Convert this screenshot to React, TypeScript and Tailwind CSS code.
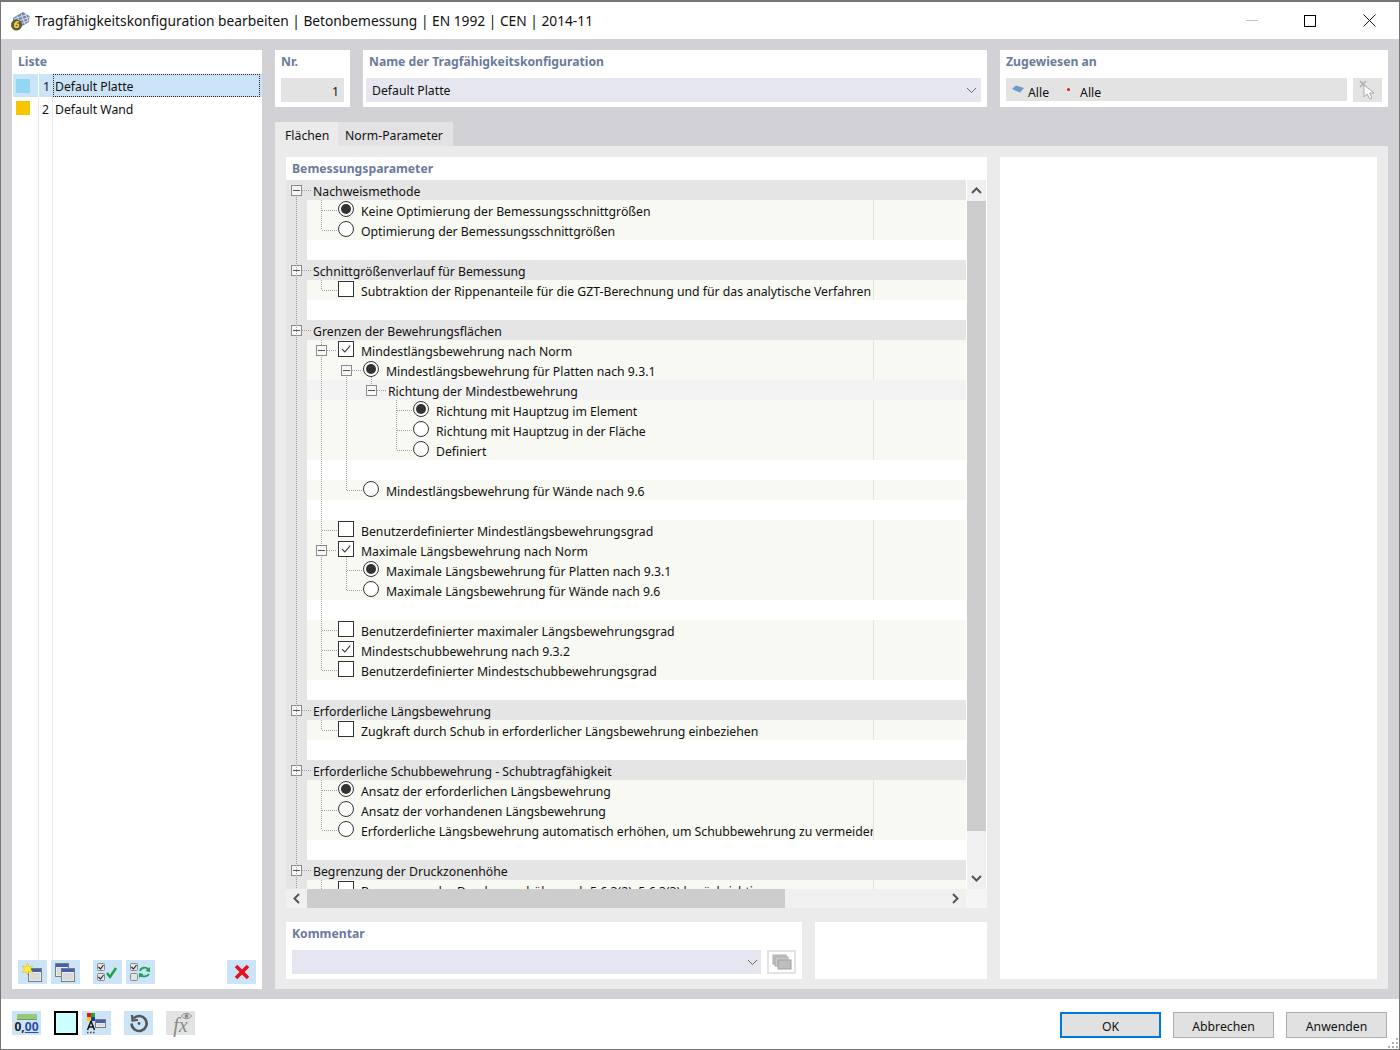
import React from 'react';
import { clsx } from 'clsx';

type Ctl = 'radio' | 'radioOn' | 'check' | 'checkOn';
type Row =
    | { kind: 'group'; text: string }
    | { kind: 'sub'; text: string }
    | { kind: 'blank' }
    | { kind: 'item'; depth: 1 | 2 | 3; ctl: Ctl; text: string; exp?: boolean };

const rows: Row[] = [
    { kind: 'group', text: 'Nachweismethode' },
    { kind: 'item', depth: 1, ctl: 'radioOn', text: 'Keine Optimierung der Bemessungsschnittgrößen' },
    { kind: 'item', depth: 1, ctl: 'radio', text: 'Optimierung der Bemessungsschnittgrößen' },
    { kind: 'blank' },
    { kind: 'group', text: 'Schnittgrößenverlauf für Bemessung' },
    { kind: 'item', depth: 1, ctl: 'check', text: 'Subtraktion der Rippenanteile für die GZT-Berechnung und für das analytische Verfahren' },
    { kind: 'blank' },
    { kind: 'group', text: 'Grenzen der Bewehrungsflächen' },
    { kind: 'item', depth: 1, ctl: 'checkOn', exp: true, text: 'Mindestlängsbewehrung nach Norm' },
    { kind: 'item', depth: 2, ctl: 'radioOn', exp: true, text: 'Mindestlängsbewehrung für Platten nach 9.3.1' },
    { kind: 'sub', text: 'Richtung der Mindestbewehrung' },
    { kind: 'item', depth: 3, ctl: 'radioOn', text: 'Richtung mit Hauptzug im Element' },
    { kind: 'item', depth: 3, ctl: 'radio', text: 'Richtung mit Hauptzug in der Fläche' },
    { kind: 'item', depth: 3, ctl: 'radio', text: 'Definiert' },
    { kind: 'blank' },
    { kind: 'item', depth: 2, ctl: 'radio', text: 'Mindestlängsbewehrung für Wände nach 9.6' },
    { kind: 'blank' },
    { kind: 'item', depth: 1, ctl: 'check', text: 'Benutzerdefinierter Mindestlängsbewehrungsgrad' },
    { kind: 'item', depth: 1, ctl: 'checkOn', exp: true, text: 'Maximale Längsbewehrung nach Norm' },
    { kind: 'item', depth: 2, ctl: 'radioOn', text: 'Maximale Längsbewehrung für Platten nach 9.3.1' },
    { kind: 'item', depth: 2, ctl: 'radio', text: 'Maximale Längsbewehrung für Wände nach 9.6' },
    { kind: 'blank' },
    { kind: 'item', depth: 1, ctl: 'check', text: 'Benutzerdefinierter maximaler Längsbewehrungsgrad' },
    { kind: 'item', depth: 1, ctl: 'checkOn', text: 'Mindestschubbewehrung nach 9.3.2' },
    { kind: 'item', depth: 1, ctl: 'check', text: 'Benutzerdefinierter Mindestschubbewehrungsgrad' },
    { kind: 'blank' },
    { kind: 'group', text: 'Erforderliche Längsbewehrung' },
    { kind: 'item', depth: 1, ctl: 'check', text: 'Zugkraft durch Schub in erforderlicher Längsbewehrung einbeziehen' },
    { kind: 'blank' },
    { kind: 'group', text: 'Erforderliche Schubbewehrung - Schubtragfähigkeit' },
    { kind: 'item', depth: 1, ctl: 'radioOn', text: 'Ansatz der erforderlichen Längsbewehrung' },
    { kind: 'item', depth: 1, ctl: 'radio', text: 'Ansatz der vorhandenen Längsbewehrung' },
    { kind: 'item', depth: 1, ctl: 'radio', text: 'Erforderliche Längsbewehrung automatisch erhöhen, um Schubbewehrung zu vermeiden' },
    { kind: 'blank' },
    { kind: 'group', text: 'Begrenzung der Druckzonenhöhe' },
    { kind: 'item', depth: 1, ctl: 'check', text: 'Begrenzung der Druckzonenhöhe nach 5.6.3(2), 5.6.3(3) berücksichtigen' },
];

// connector segments of the tree, x1 y1 x2 y2 relative to the tree's corner
const dots: number[][] = [
    [10.5, 17, 10.5, 709],
    ...[10, 90, 150, 530, 590, 690].map(y => [16, y + 0.5, 25, y + 0.5]),
    [35.5, 20, 35.5, 50], [36, 30.5, 51, 30.5], [36, 50.5, 51, 50.5],
    [35.5, 100, 35.5, 110], [36, 110.5, 51, 110.5],
    [35.5, 160, 35.5, 165], [35.5, 177, 35.5, 365], [41, 170.5, 51, 170.5],
    [41, 370.5, 51, 370.5], [36, 350.5, 51, 350.5], [36, 450.5, 51, 450.5], [36, 470.5, 51, 470.5], [36, 490.5, 51, 490.5],
    [35.5, 377, 35.5, 490],
    [60.5, 197, 60.5, 310], [61, 310.5, 76, 310.5], [66, 190.5, 76, 190.5],
    [60.5, 377, 60.5, 410], [61, 390.5, 76, 390.5], [61, 410.5, 76, 410.5],
    [85.5, 197, 85.5, 205], [91, 210.5, 100, 210.5],
    [110.5, 220, 110.5, 270], [111, 230.5, 126, 230.5], [111, 250.5, 126, 250.5], [111, 270.5, 126, 270.5],
    [35.5, 540, 35.5, 550], [36, 550.5, 51, 550.5],
    [35.5, 600, 35.5, 650], [36, 610.5, 51, 610.5], [36, 630.5, 51, 630.5], [36, 650.5, 51, 650.5],
    [35.5, 700, 35.5, 709],
];

function Expander({ className }: { className?: string }) {
    return (
        <span className={clsx('w-[11px] h-[11px] shrink-0 border border-[#8a8a8a] bg-[#f7f7f7] flex items-center justify-center', className)}>
            <span className="w-[7px] h-px bg-[#555]" />
        </span>
    );
}

function Control({ ctl }: { ctl: Ctl }) {
    if (ctl === 'radio' || ctl === 'radioOn') {
        return (
            <span className="w-4 h-4 shrink-0 -mt-[2px] rounded-full border border-[#333] bg-white flex items-center justify-center">
                {ctl === 'radioOn' && <span className="w-[10px] h-[10px] rounded-full bg-[#333]" />}
            </span>
        );
    }
    return (
        <span className="w-4 h-4 shrink-0 -mt-[2px] border border-[#333] bg-white flex items-center justify-center">
            {ctl === 'checkOn' && (
                <svg width="12" height="12" viewBox="0 0 12 12" fill="none" stroke="#333" strokeWidth="1.1">
                    <path d="M2 6.2 L4.8 9 L10.2 2.6" />
                </svg>
            )}
        </span>
    );
}

function TreeRow({ row }: { row: Row }) {
    if (row.kind === 'group') {
        return (
            <div className="h-5 shrink-0 flex items-center pl-[5px] bg-[#e5e5e5]">
                <Expander />
                <span className="ml-[11px] mt-[4px]">{row.text}</span>
            </div>
        );
    }
    return (
        <div className="h-5 shrink-0 flex">
            <div className="w-[21px] shrink-0 bg-[#e5e5e5]" />
            {row.kind === 'blank' && <div className="flex-1 bg-white" />}
            {row.kind === 'sub' && (
                <div className="flex-1 bg-[#f3f3f3] flex items-center pl-[59px]">
                    <Expander />
                    <span className="ml-[11px] mt-[4px]">{row.text}</span>
                </div>
            )}
            {row.kind === 'item' && (
                <div className="flex-1 flex bg-[#f8f9f3]">
                    <div
                        className={clsx(
                            'w-[567px] shrink-0 overflow-hidden whitespace-nowrap flex items-center border-r border-[#e2e2de]',
                            row.depth === 1 && 'pl-[31px]',
                            row.depth === 2 && 'pl-[56px]',
                            row.depth === 3 && 'pl-[106px]',
                        )}
                    >
                        {row.exp && <Expander className="-ml-[22px] mr-[11px]" />}
                        <Control ctl={row.ctl} />
                        <span className="ml-[7px] mt-[4px]">{row.text}</span>
                    </div>
                </div>
            )}
        </div>
    );
}

function Chevron({ dir = 'down', strong }: { dir?: 'down' | 'up' | 'left' | 'right'; strong?: boolean }) {
    const d = { down: 'M1 3 L5.5 7.5 L10 3', up: 'M1 8 L5.5 3.5 L10 8', left: 'M8 1 L3.5 5.5 L8 10', right: 'M3 1 L7.5 5.5 L3 10' }[dir];
    return (
        <svg width="11" height="11" viewBox="0 0 11 11" fill="none" stroke={strong ? '#555' : '#666'} strokeWidth={strong ? 2 : 1}>
            <path d={d} />
        </svg>
    );
}

function Heading({ children }: { children: React.ReactNode }) {
    return <div className="text-[12.2px] font-bold text-[#6b7a9c] leading-[20px] -mb-[2px]">{children}</div>;
}

function IconBtn({ children, off, className }: { children: React.ReactNode; off?: boolean; className?: string }) {
    return (
        <div className={clsx('w-[29px] h-6 shrink-0 flex items-center justify-center', off ? 'bg-[#e3e3e3]' : 'bg-[#cce4f7]', className)}>
            {children}
        </div>
    );
}

function MiniWindow({ x, y, w = 14, h = 14 }: { x: number; y: number; w?: number; h?: number }) {
    return (
        <g>
            <rect x={x + 0.5} y={y + 0.5} width={w - 1} height={h - 1} fill="#ececec" stroke="#7b7b7b" />
            <rect x={x + 1} y={y + 1} width={w - 2} height={3} fill="#3f5fb5" />
            <rect x={x + 2} y={y + 5} width={w - 4} height={h - 7} fill="#d9d9d9" />
        </g>
    );
}

function CheckBoxGlyph({ x, y, on }: { x: number; y: number; on?: boolean }) {
    return (
        <g>
            <rect x={x + 0.5} y={y + 0.5} width={7} height={7} rx="1" fill="#e4e4e4" stroke="#8a8a8a" />
            {on && <path d={`M${x + 1.5} ${y + 4} l2 2 l3 -4`} fill="none" stroke="#222" strokeWidth="1.1" />}
        </g>
    );
}

function TitleIcon() {
    return (
        <svg width="20" height="20" viewBox="0 0 20 20" className="shrink-0">
            <path d="M3 7 L13 1 L19.5 5 L19 11 L9 17 L3 13 Z" fill="#73829e" />
            <path d="M4 8 L17 3.5 M5 11 L19 6.5 M7 14 L19 9.5 M7 5 L11 15 M11 3 L15 13 M15 1.5 L18 10" stroke="#cfd8e8" strokeWidth="1.1" fill="none" />
            <circle cx="6.5" cy="14" r="5.5" fill="#5f5d3c" />
            <path d="M8.8 11 C6.6 10.4 4.6 12 4.6 14.4 C4.6 16.8 8.4 16.8 8.4 14.4 C8.4 12.6 5.4 12.6 4.9 14" fill="none" stroke="#f5d23a" strokeWidth="1.5" />
        </svg>
    );
}

function Btn({ label, primary }: { label: string; primary?: boolean }) {
    return (
        <div
            className={clsx(
                'w-[101px] h-[26px] bg-[#e1e1e1] flex items-center justify-center',
                primary ? 'border-2 border-[#0078d7]' : 'border border-[#adadad]',
            )}
        >
            <span className="mt-[4px]">{label}</span>
        </div>
    );
}

export default function App() {
    return (
        <div className="w-[1400px] h-[1050px] flex flex-col overflow-hidden border-x border-b border-t-2 border-[#767676] bg-white text-[#111] text-[12.25px] font-['Noto_Sans','Open_Sans',sans-serif]">
            {/* Title bar */}
            <div className="h-[37px] shrink-0 flex items-center pl-[9px]">
                <TitleIcon />
                <span className="ml-[5px] mt-[2px] text-[13.75px]">Tragfähigkeitskonfiguration bearbeiten | Betonbemessung | EN 1992 | CEN | 2014-11</span>
                <div className="ml-auto flex items-center">
                    <span className="w-3 h-px bg-[#c4c4c4] mr-[46px]" />
                    <span className="w-3 h-3 border border-black mr-[47px]" />
                    <svg width="13" height="13" viewBox="0 0 13 13" stroke="#111" className="mr-[23px]">
                        <path d="M0.5 0.5 L12.5 12.5 M12.5 0.5 L0.5 12.5" />
                    </svg>
                </div>
            </div>

            {/* Body */}
            <div className="flex-1 min-h-0 bg-[#d2d2d6] pl-[11px] pr-[11px] pt-[11px] pb-[10px] flex gap-[13px]">
                {/* List panel */}
                <div className="w-[250px] shrink-0 bg-white flex flex-col pt-[2px]">
                    <div className="pl-[6px] h-[22px]"><Heading>Liste</Heading></div>
                    <div className="flex-1 relative flex flex-col pl-px">
                        <div className="h-[23px] flex bg-[#cce4f7]">
                            <div className="w-[26px] flex items-center pl-[3px] border-r border-white"><span className="w-[14px] h-[14px] bg-[#92d7f4]" /></div>
                            <div className="w-[14px] text-right pr-[3px] leading-[25px]">1</div>
                            <div className="w-[207px] border border-dotted border-[#222] pl-px leading-[23px]">Default Platte</div>
                        </div>
                        <div className="flex-1 flex">
                            <div className="w-[26px] pl-[3px] pt-1 border-r border-[#e8e8e8]"><span className="block w-[14px] h-[14px] bg-[#f7c600]" /></div>
                            <div className="w-[14px] text-right pr-[3px] leading-[25px] border-r border-[#e8e8e8]">2</div>
                            <div className="pl-[2px] leading-[25px]">Default Wand</div>
                        </div>
                    </div>
                    <div className="h-[29px] shrink-0 pl-[6px] pr-[6px] flex bg-white">
                        <IconBtn className="mr-1">
                            <svg width="29" height="24" viewBox="0 0 29 24">
                                <MiniWindow x={10} y={8} />
                                <path d="M9.5 3 L11 7 L15 6 L12.6 9 L15 12.5 L10.8 11.5 L9.5 15 L8 11.5 L4 12.5 L6.4 9 L4 6 L8 7 Z" fill="#ffec3d" stroke="#d9b400" strokeWidth="0.5" />
                            </svg>
                        </IconBtn>
                        <IconBtn className="mr-[13px]">
                            <svg width="29" height="24" viewBox="0 0 29 24">
                                <MiniWindow x={4} y={3} />
                                <MiniWindow x={10} y={8} />
                            </svg>
                        </IconBtn>
                        <IconBtn className="mr-1">
                            <svg width="29" height="24" viewBox="0 0 29 24">
                                <CheckBoxGlyph x={4} y={3} on />
                                <CheckBoxGlyph x={4} y={13} on />
                                <path d="M14 13 L17 17 L23 8" fill="none" stroke="#17a34a" strokeWidth="2.4" />
                            </svg>
                        </IconBtn>
                        <IconBtn>
                            <svg width="29" height="24" viewBox="0 0 29 24">
                                <CheckBoxGlyph x={4} y={3} on />
                                <CheckBoxGlyph x={4} y={13} />
                                <path d="M14 11 C15 7 20 7 22 9 M23 14 C21 17 16 17 14 15" fill="none" stroke="#17a34a" strokeWidth="1.8" />
                                <path d="M24 7 L24 12 L19.5 11 Z M13 18 L13 13 L17.5 14 Z" fill="#17a34a" />
                            </svg>
                        </IconBtn>
                        <IconBtn className="ml-auto">
                            <svg width="16" height="16" viewBox="0 0 16 16" stroke="#e8101a" strokeWidth="3.6">
                                <path d="M2 2 L14 14 M14 2 L2 14" />
                            </svg>
                        </IconBtn>
                    </div>
                </div>

                {/* Right side */}
                <div className="flex-1 min-w-0 flex flex-col">
                    <div className="h-[57px] shrink-0 flex gap-[13px]">
                        <div className="w-[75px] bg-white px-[6px] pt-[2px]">
                            <Heading>Nr.</Heading>
                            <div className="mt-2 h-6 bg-[#e3e3e3] flex items-center justify-end pr-[5px]"><span className="mt-[4px]">1</span></div>
                        </div>
                        <div className="w-[624px] bg-white pt-[2px] pl-[3px] pr-[6px]">
                            <div className="pl-[3px]"><Heading>Name der Tragfähigkeitskonfiguration</Heading></div>
                            <div className="mt-2 h-6 bg-[#e6e6f0] flex items-center justify-between pl-[6px] pr-[4px]">
                                <span className="mt-[3px]">Default Platte</span>
                                <Chevron />
                            </div>
                        </div>
                        <div className="flex-1 bg-white px-[6px] pt-[2px]">
                            <Heading>Zugewiesen an</Heading>
                            <div className="mt-2 flex gap-[6px]">
                                <div className="flex-1 h-[23px] bg-[#e3e3e3] flex items-center pl-[6px]">
                                    <svg width="12" height="8" viewBox="0 0 12 8" className="-mt-[2px]"><path d="M0 4 L4 0.5 L12 3 L8 7.5 Z" fill="#6c9ac9" /></svg>
                                    <span className="ml-[4px] mt-[7px]">Alle</span>
                                    <span className="ml-[18px] w-[3px] h-[3px] rounded-full bg-[#e11]" />
                                    <span className="ml-[10px] mt-[7px]">Alle</span>
                                </div>
                                <div className="w-[29px] h-6 bg-[#e3e3e3] flex items-center justify-center">
                                    <svg width="20" height="20" viewBox="0 0 20 20">
                                        <path d="M2 1 L8 7 M8 1 L2 7" stroke="#aaa" strokeWidth="1.4" />
                                        <path d="M6 5 L6 17 L9 14 L12 19 L14 18 L11.5 13 L16 13 Z" fill="#fff" stroke="#aaa" />
                                    </svg>
                                </div>
                            </div>
                        </div>
                    </div>

                    {/* Tabs */}
                    <div className="mt-[15px] h-6 shrink-0 flex">
                        <div className="w-[63px] bg-[#ebebeb] pl-[10px] leading-[27px]">Flächen</div>
                        <div className="w-[115px] bg-[#e2e2e4] pl-[7px] leading-[27px]">Norm-Parameter</div>
                    </div>

                    <div className="flex-1 min-h-0 bg-[#ebebeb] pl-[11px] pr-[11px] pt-[11px] pb-[10px] flex gap-[13px]">
                        <div className="w-[701px] shrink-0 flex flex-col gap-[14px]">
                            <div className="h-[751px] shrink-0 bg-white flex flex-col">
                                <div className="h-[23px] shrink-0 pl-[6px] pt-[2px]"><Heading>Bemessungsparameter</Heading></div>
                                <div className="h-[709px] shrink-0 flex overflow-hidden">
                                    <div className="w-[680px] shrink-0 relative flex flex-col overflow-hidden">
                                        {rows.map((row, i) => <TreeRow key={i} row={row} />)}
                                        <svg width="680" height="709" className="absolute left-0 top-0 pointer-events-none">
                                            {dots.map(([x1, y1, x2, y2], i) => (
                                                <line key={i} x1={x1} y1={y1} x2={x2} y2={y2} stroke="#a0a0a0" strokeDasharray="1 1" />
                                            ))}
                                        </svg>
                                    </div>
                                    <div className="ml-px w-[19px] shrink-0 bg-[#f0f0f0] flex flex-col">
                                        <div className="h-[21px] shrink-0 flex items-center justify-center"><Chevron dir="up" strong /></div>
                                        <div className="h-[630px] shrink-0 bg-[#cdcdcd]" />
                                        <div className="flex-1 flex items-end justify-center pb-[5px]"><Chevron dir="down" strong /></div>
                                    </div>
                                </div>
                                <div className="h-[19px] shrink-0 flex">
                                    <div className="w-[21px] bg-[#f0f0f0] flex items-center justify-center"><Chevron dir="left" strong /></div>
                                    <div className="w-[478px] bg-[#cdcdcd]" />
                                    <div className="w-[181px] bg-[#f0f0f0] flex items-center justify-end pr-[5px]"><Chevron dir="right" strong /></div>
                                    <div className="flex-1 bg-[#f5f5f5]" />
                                </div>
                            </div>
                            <div className="flex-1 flex gap-[13px]">
                                <div className="w-[516px] bg-white pl-[6px] pt-[2px]">
                                    <Heading>Kommentar</Heading>
                                    <div className="mt-2 flex gap-[6px]">
                                        <div className="w-[469px] h-6 bg-[#e6e6f0] flex items-center justify-end pr-[3px]"><Chevron /></div>
                                        <div className="w-[29px] h-6 bg-[#e3e3e3] p-[2px]">
                                            <div className="w-full h-full bg-white flex items-center justify-center">
                                                <svg width="20" height="16" viewBox="0 0 20 16">
                                                    <rect x="1" y="1" width="13" height="9" fill="#c9c9c9" stroke="#aaa" />
                                                    <rect x="3" y="3" width="13" height="9" fill="#c9c9c9" stroke="#aaa" />
                                                    <rect x="6" y="6" width="13" height="9" fill="#bdbdbd" stroke="#a0a0a0" />
                                                </svg>
                                            </div>
                                        </div>
                                    </div>
                                </div>
                                <div className="flex-1 bg-white" />
                            </div>
                        </div>
                        <div className="flex-1 bg-white" />
                    </div>
                </div>
            </div>

            {/* Footer */}
            <div className="h-[50px] shrink-0 relative flex items-center pl-[11px] pr-[12px] pb-[2px]">
                <IconBtn className="mr-[13px] flex-col">
                    <span className="w-5 h-[6px] bg-[#9bc77c] border-b border-[#6fa04d]" />
                    <span className="text-[12px] font-bold leading-[13px] text-[#222]">0,<span className="text-[#2b4fa0] underline">00</span></span>
                </IconBtn>
                <div className="w-6 h-6 border-2 border-black bg-[#ccffff] mr-1" />
                <IconBtn className="mr-[13px]">
                    <svg width="29" height="24" viewBox="0 0 29 24">
                        <rect x="5" y="2" width="4" height="4" fill="#e11" /><rect x="9" y="2" width="4" height="4" fill="#2a2" />
                        <rect x="5" y="6" width="4" height="4" fill="#fc0" /><rect x="9" y="6" width="4" height="4" fill="#23c" />
                        <MiniWindow x={13} y={8} w={11} h={9} />
                        <path d="M9 10 L5.5 19 M9 10 L12.5 19 M6.8 16 L11.2 16" stroke="#111" strokeWidth="1.5" fill="none" />
                        <path d="M5 21.5 H6.5 M8 21.5 H9.5 M11 21.5 H12.5" stroke="#444" strokeWidth="1.5" />
                    </svg>
                </IconBtn>
                <IconBtn className="mr-[13px]">
                    <svg width="20" height="20" viewBox="0 0 20 20" fill="none" stroke="#555" strokeWidth="2.6">
                        <path d="M4.5 5.5 A7.5 7.5 0 1 1 2.6 10.5" />
                        <path d="M3 2 L3.5 7.5 L9 7" strokeWidth="2.2" />
                        <circle cx="10" cy="10.5" r="1.4" fill="#555" stroke="none" />
                    </svg>
                </IconBtn>
                <IconBtn off className="relative">
                    <span className="font-['Liberation_Serif',serif] italic text-[20px] leading-[20px] text-[#8a8a8a] mt-[3px]">fx</span>
                    <svg width="11" height="8" viewBox="0 0 11 8" fill="none" stroke="#8a8a8a" className="absolute right-[3px] top-[1px]">
                        <path d="M0.5 4 C3 0.5 8 0.5 10.5 4 C8 7.5 3 7.5 0.5 4 Z" /><circle cx="5.5" cy="4" r="1.5" fill="#8a8a8a" />
                    </svg>
                </IconBtn>
                <div className="ml-auto flex gap-3 mt-[4px]">
                    <Btn label="OK" primary />
                    <Btn label="Abbrechen" />
                    <Btn label="Anwenden" />
                </div>
                <svg width="10" height="10" viewBox="0 0 10 10" fill="#b0b0b0" className="absolute right-px bottom-px">
                    <rect x="8" y="0" width="2" height="2" /><rect x="4" y="4" width="2" height="2" /><rect x="8" y="4" width="2" height="2" />
                    <rect x="0" y="8" width="2" height="2" /><rect x="4" y="8" width="2" height="2" /><rect x="8" y="8" width="2" height="2" />
                </svg>
            </div>
        </div>
    );
}
